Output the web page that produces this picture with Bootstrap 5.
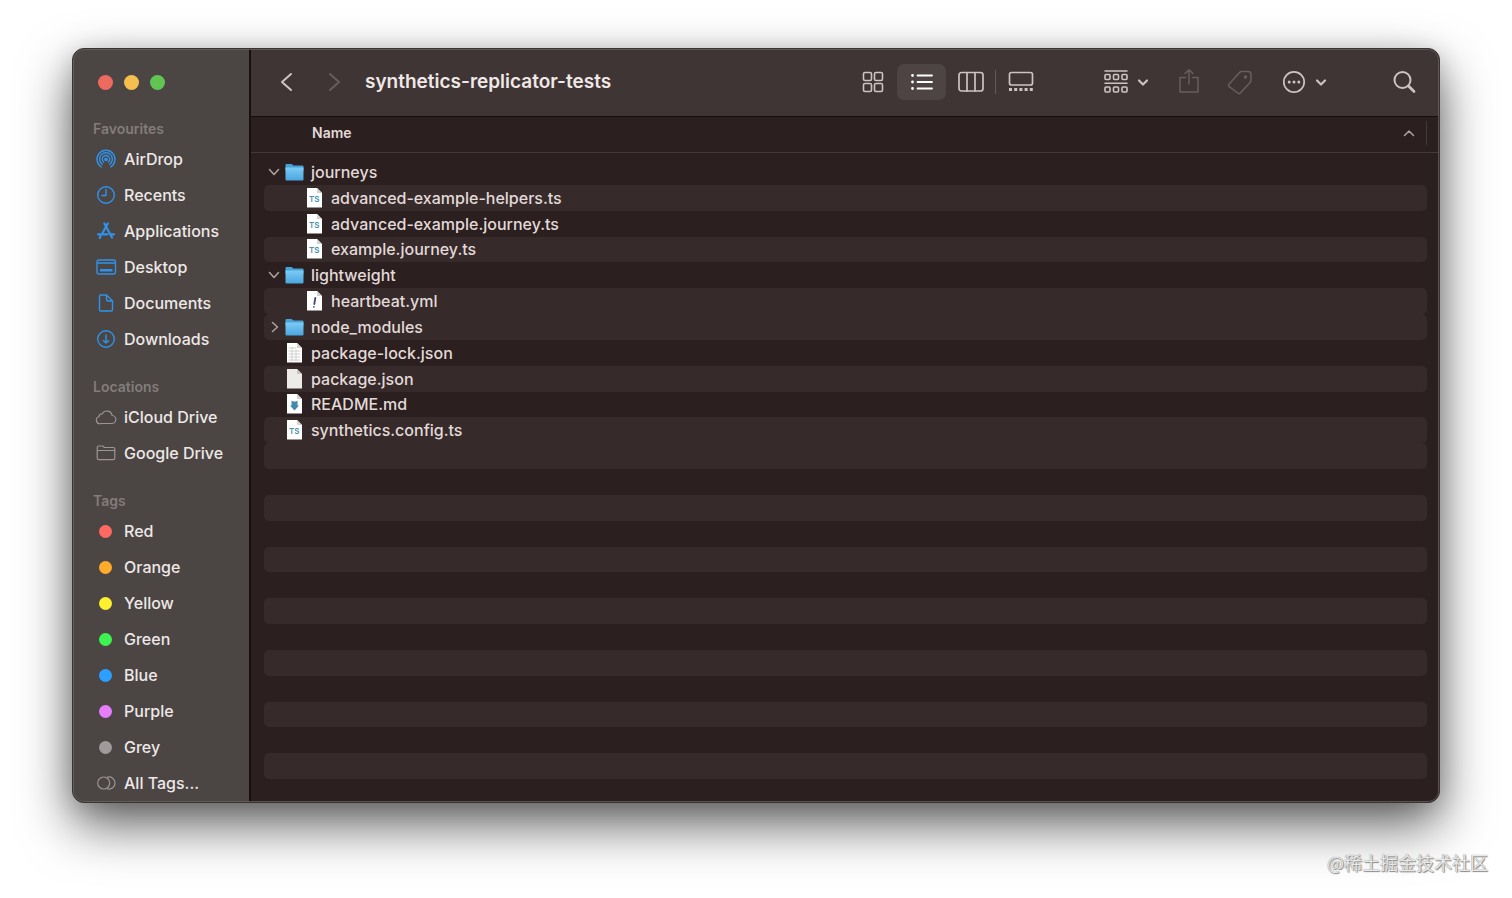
<!DOCTYPE html>
<html lang="en">
<head>
<meta charset="utf-8">
<meta name="viewport" content="width=device-width, initial-scale=1">
<title>synthetics-replicator-tests</title>
<link href="https://cdn.jsdelivr.net/npm/bootstrap@5.3.0/dist/css/bootstrap.min.css" rel="stylesheet">
<style>
  body { font-family: Inter, "Noto Sans CJK SC", sans-serif; font-size: 16px; font-weight: 500; line-height: 24px; color: #e2dad9; background: #fff; }
  svg { display: block; fill: none; stroke: currentColor; stroke-linecap: round; stroke-linejoin: round; flex: none; }
  button { color: inherit; background: none; border: 0; padding: 0; }
  .desk { padding: 48px 72px 95px; overflow: hidden; }
  .finder { border: 1px solid #3a3535; border-radius: 12px; background: #2b1f1f; box-shadow: 0 22px 52px rgba(0,0,0,.62), 0 4px 24px rgba(0,0,0,.15); }
  .finder::after { content: ""; position: absolute; inset: 0; border: 1px solid #6b6564; border-radius: 11px; pointer-events: none; opacity: .7; }
  .side { width: 178px; background: #4b4544; border-right: 2px solid #171010; padding: 26px 0 0 20px; }
  .lights { gap: 11px; padding-left: 5px; margin-bottom: 25px; }
  .light { width: 15px; height: 15px; border-radius: 50%; }
  .side h2 { font-size: 14px; line-height: 20px; font-weight: 600; color: #837c7b; margin: 0 0 2px; }
  .side ul { margin-bottom: 20px; }
  .side li a { height: 36px; gap: 6px; color: #eee8e7; text-decoration: none; }
  .side li svg { width: 24px; height: 24px; margin-left: 1px; stroke-width: 1.4; color: #3092ea; }
  .side li svg.dim { color: #9b9493; stroke-width: 1.2; }
  .tagdot { width: 13px; height: 13px; margin: 0 6px; border-radius: 50%; }
  .bar { height: 68px; background: #3f3534; border-bottom: 1px solid #140d0d; padding: 0 22px 1px 24px; color: #cdc3c2; }
  .bar h1 { font-size: 19px; line-height: 24px; font-weight: 600; color: #efe8e7; margin: 0 0 0 18px; }
  .view { width: 49px; height: 36px; border-radius: 7px; }
  .view.on { background: #4e4443; color: #fff; }
  .off { color: #685e5d; }
  .tools { gap: 24px; margin-left: 58px; }
  .find { padding-left: 12px; }
  .files thead tr { height: 36px; border-bottom: 1px solid #453a39; padding: 0 11px 3px 60px; }
  .files th { font-size: 14px; font-weight: 600; }
  .sorter { border-right: 1px solid #43393a; height: 24px; padding-right: 10px; color: #aaa09f; }
  .files tbody { grid-auto-rows: minmax(0, 1fr); padding: 6px 12px 23px 13px; }
  .files tbody tr { border-radius: 5px; }
  .files tbody tr.lit { background: #362a2a; }
  .files td { padding: 0; }
  .twist { width: 20px; height: 20px; color: #aaa09f; }
  .ico { width: 21px; height: 22px; margin-right: 6px; }
  .ico text { font: 600 8px Inter, sans-serif; stroke: none; fill: #4c91a8; }
  .files td.nest { padding-left: 20px; }
  .stamp { right: 24px; bottom: 24px; font-family: "Noto Sans CJK SC", sans-serif; font-size: 18px; font-weight: 400; color: #e8e8e8; text-shadow: 0 0 1px #777, 1px 1px 1px #888; }
</style>
</head>
<body>
<svg width="0" height="0" class="position-absolute" aria-hidden="true">
  <defs>
    <linearGradient id="blue" x1="0" y1="0" x2="0" y2="1"><stop offset="0" stop-color="#7ccbf5"/><stop offset="1" stop-color="#4aa6e0"/></linearGradient>
    <symbol id="folder" viewBox="0 0 21 22"><path d="M1.500 4q0-1 1-1h5l2 1.500h9q1 0 1 1v4h-18z" fill="#46a3da" stroke="none"/><path d="M1.500 6.500h18v12q0 1-1 1h-16q-1 0-1-1z" fill="url(#blue)" stroke="none"/></symbol>
    <symbol id="page" viewBox="0 0 21 22"><path d="M3 1h10l5 5v14.500H3z" fill="#fff" stroke="none"/><path d="M13 1v5h5z" fill="#d3d3d3" stroke="none"/></symbol>
    <symbol id="down" viewBox="0 0 20 20"><path d="M5.500 7.500l4.500 5 4.500-5" stroke-width="1.600"/></symbol>
    <symbol id="right" viewBox="0 0 20 20"><path d="M8.500 5.500l5 4.500-5 4.500" stroke-width="1.600"/></symbol>
  </defs>
</svg>
<main class="desk vh-100 position-relative">
  <div class="finder h-100 d-flex overflow-hidden position-relative">
    <nav class="side flex-shrink-0 overflow-hidden" aria-label="Sidebar">
      <div class="lights d-flex">
        <button class="light" style="background:#ed6a5e" aria-label="Close"></button>
        <button class="light" style="background:#f4bf4f" aria-label="Minimise"></button>
        <button class="light" style="background:#61c554" aria-label="Zoom"></button>
      </div>
      <h2 class="pt-1">Favourites</h2>
      <ul class="list-unstyled">
        <li><a href="#" class="d-flex align-items-center"><svg viewBox="0 0 24 24"><path d="M7.300 20a9 9 0 1 1 9.400 0M8.200 17.300a6.400 6.400 0 1 1 7.600 0M9.600 15a3.700 3.700 0 1 1 4.800 0"/><path d="M12 12.500l-2.200 7.500h4.400z" fill="#4b4544" stroke="none"/><circle cx="12" cy="12.300" r="1.200" fill="currentColor"/></svg>AirDrop</a></li>
        <li><a href="#" class="d-flex align-items-center"><svg viewBox="0 0 24 24"><circle cx="12" cy="12" r="8.300"/><path d="M12 6.500V12.500H8"/></svg>Recents</a></li>
        <li><a href="#" class="d-flex align-items-center"><svg viewBox="0 0 24 24"><path d="M13.800 4.500L8 15M10.300 4.500L18 18.500M4 15.300h9.500M17.200 15.300H20M6.400 17.500L5.700 19" stroke-width="2.200"/></svg>Applications</a></li>
        <li><a href="#" class="d-flex align-items-center"><svg viewBox="0 0 24 24"><rect x="3" y="5" width="18.500" height="14" rx="2"/><path d="M3.500 8h17.500"/><path d="M6 14h12.500v2.500H6z" fill="currentColor" stroke="none"/></svg>Desktop</a></li>
        <li><a href="#" class="d-flex align-items-center"><svg viewBox="0 0 24 24"><path d="M5.500 5.500q0-1.500 1.500-1.500h5.500l6 6v8.500q0 1.500-1.500 1.500H7q-1.500 0-1.500-1.500zM12.500 4v4.500q0 1.500 1.500 1.500h4.500"/></svg>Documents</a></li>
        <li><a href="#" class="d-flex align-items-center"><svg viewBox="0 0 24 24"><circle cx="12" cy="12" r="8.300"/><path d="M12 8v8M9.300 13.500L12 16l2.700-2.500"/></svg>Downloads</a></li>
      </ul>
      <h2>Locations</h2>
      <ul class="list-unstyled">
        <li><a href="#" class="d-flex align-items-center"><svg class="dim" viewBox="0 0 24 24"><path d="M7 18.500h10.500a4 4 0 0 0 .6-8A5.300 5.300 0 0 0 8.200 8.800a3.200 3.200 0 0 0-3.300 3A3.500 3.500 0 0 0 7 18.500z"/></svg>iCloud Drive</a></li>
        <li><a href="#" class="d-flex align-items-center"><svg class="dim" viewBox="0 0 24 24"><path d="M3.200 6.500q0-1.500 1.500-1.500h4l1.800 1.500h8.800q1.500 0 1.500 1.500v9q0 1.700-1.500 1.700H4.700q-1.500 0-1.500-1.700zM3.200 9.500h17.600"/></svg>Google Drive</a></li>
      </ul>
      <h2>Tags</h2>
      <ul class="list-unstyled mb-0">
        <li><a href="#" class="d-flex align-items-center"><span class="tagdot" style="background:#ff6961"></span>Red</a></li>
        <li><a href="#" class="d-flex align-items-center"><span class="tagdot" style="background:#ffab2c"></span>Orange</a></li>
        <li><a href="#" class="d-flex align-items-center"><span class="tagdot" style="background:#fcf02f"></span>Yellow</a></li>
        <li><a href="#" class="d-flex align-items-center"><span class="tagdot" style="background:#3df34f"></span>Green</a></li>
        <li><a href="#" class="d-flex align-items-center"><span class="tagdot" style="background:#2d9fff"></span>Blue</a></li>
        <li><a href="#" class="d-flex align-items-center"><span class="tagdot" style="background:#e77dfb"></span>Purple</a></li>
        <li><a href="#" class="d-flex align-items-center"><span class="tagdot" style="background:#a09a9a"></span>Grey</a></li>
        <li><a href="#" class="d-flex align-items-center"><svg class="dim" viewBox="0 0 24 24"><circle cx="9.700" cy="12" r="6"/><path d="M13.500 6.200a6 6 0 1 1 0 11.600"/></svg>All Tags...</a></li>
      </ul>
    </nav>
    <section class="flex-grow-1 d-flex flex-column">
      <header class="bar d-flex align-items-center flex-shrink-0">
        <button aria-label="Back"><svg width="24" height="24" viewBox="0 0 24 24" stroke-width="2"><path d="M16 4l-9 8 9 8"/></svg></button>
        <button class="off ms-4" aria-label="Forward"><svg width="24" height="24" viewBox="0 0 24 24" stroke-width="2"><path d="M7 4l9 8-9 8"/></svg></button>
        <h1 class="flex-grow-1 text-nowrap">synthetics-replicator-tests</h1>
        <div class="d-flex align-items-center" role="group" aria-label="View">
          <button class="view d-flex align-items-center justify-content-center" aria-label="Icons"><svg width="24" height="24" viewBox="0 0 24 24" stroke-width="1.6"><rect x="2.500" y="2.500" width="8" height="8" rx="1.500"/><rect x="13.500" y="2.500" width="8" height="8" rx="1.500"/><rect x="2.500" y="13.500" width="8" height="8" rx="1.500"/><rect x="13.500" y="13.500" width="8" height="8" rx="1.500"/></svg></button>
          <button class="view on d-flex align-items-center justify-content-center" aria-label="List"><svg width="24" height="24" viewBox="0 0 24 24" stroke-width="1.800"><path d="M7.500 5.500H22M7.500 12H22M7.500 18.500H22"/><path d="M2.500 5.500h.01M2.500 12h.01M2.500 18.500h.01" stroke-width="2.800"/></svg></button>
          <button class="view d-flex align-items-center justify-content-center" aria-label="Columns"><svg width="28" height="24" viewBox="0 0 28 24" stroke-width="1.700"><rect x="2" y="2.500" width="24" height="18.500" rx="2.500"/><path d="M10 3v18M18 3v18"/></svg></button>
          <span class="vr align-self-center" style="height:24px"></span>
          <button class="view d-flex align-items-center justify-content-center" aria-label="Gallery"><svg width="26" height="24" viewBox="0 0 26 24" stroke-width="1.700"><rect x="1.500" y="2.500" width="23" height="12.500" rx="2"/><path d="M1 18h3v3H1zM6.200 18h3v3h-3zM11.400 18h3v3h-3zM16.600 18h3v3h-3zM21.800 18h3v3h-3z" fill="currentColor" stroke="none"/></svg></button>
        </div>
        <div class="tools d-flex align-items-center">
          <button class="d-flex align-items-center" aria-label="Group"><svg width="26" height="26" viewBox="0 0 26 26" stroke-width="1.600"><path d="M2 2h22M2 14.200h22"/><rect x="2" y="5.500" width="5" height="5" rx="1"/><rect x="10.500" y="5.500" width="5" height="5" rx="1"/><rect x="19" y="5.500" width="5" height="5" rx="1"/><rect x="2" y="18" width="5" height="5" rx="1"/><rect x="10.500" y="18" width="5" height="5" rx="1"/><rect x="19" y="18" width="5" height="5" rx="1"/></svg><svg class="ms-1" width="20" height="20" viewBox="0 0 20 20" stroke-width="2.200"><path d="M6 8.500l4 4 4-4"/></svg></button>
          <button class="off" aria-label="Share"><svg width="26" height="26" viewBox="0 0 26 26" stroke-width="1.500"><path d="M8.500 8.500H3V23h18V8.500h-5.500M12 15V.8M8 4.500l4-3.700 4 3.700"/></svg></button>
          <button class="off" aria-label="Tags"><svg width="26" height="26" viewBox="0 0 26 26" stroke-width="1.500"><path d="M2 15.200L12.500 3.500Q13.500 2.400 15 2.400h6q3 0 3 3v5.500q0 1.500-1 2.500L13.300 24q-1.200 1.200-2.500 0l-8.600-6.300q-1.200-1.200-.2-2.500z"/><circle cx="18.500" cy="8" r="1"/></svg></button>
          <button class="d-flex align-items-center ms-1" aria-label="More"><svg width="26" height="26" viewBox="0 0 26 26" stroke-width="1.700"><circle cx="13" cy="13" r="10.200"/><path d="M8.200 13h.01M13 13h.01M17.800 13h.01" stroke-width="3"/></svg><svg class="ms-1" width="20" height="20" viewBox="0 0 20 20" stroke-width="2.200"><path d="M6 8.500l4 4 4-4"/></svg></button>
        </div>
        <button class="find ms-5" aria-label="Search"><svg width="26" height="26" viewBox="0 0 26 26" stroke-width="2"><circle cx="11.500" cy="11" r="8"/><path d="M17.500 17l5.500 5.500" stroke-width="2.800"/></svg></button>
      </header>
      <table class="files d-flex flex-column flex-grow-1">
        <thead class="d-block">
          <tr class="d-flex align-items-center"><th class="flex-grow-1">Name</th><th><button class="sorter d-flex align-items-center" aria-label="Sort"><svg width="14" height="14" viewBox="0 0 14 14" stroke-width="1.500"><path d="M2.500 9.500L7 5l4.500 4.500"/></svg></button></th></tr>
        </thead>
        <tbody class="d-grid flex-grow-1">
          <tr class="d-flex align-items-center"><td class="d-flex align-items-center"><button class="twist" aria-label="Collapse"><svg width="20" height="20"><use href="#down"/></svg></button><svg class="ico"><use href="#folder"/></svg>journeys</td></tr>
          <tr class="d-flex align-items-center lit"><td class="d-flex align-items-center nest"><span class="twist"></span><svg class="ico"><use href="#page"/><text x="5" y="15">TS</text></svg>advanced-example-helpers.ts</td></tr>
          <tr class="d-flex align-items-center"><td class="d-flex align-items-center nest"><span class="twist"></span><svg class="ico"><use href="#page"/><text x="5" y="15">TS</text></svg>advanced-example.journey.ts</td></tr>
          <tr class="d-flex align-items-center lit"><td class="d-flex align-items-center nest"><span class="twist"></span><svg class="ico"><use href="#page"/><text x="5" y="15">TS</text></svg>example.journey.ts</td></tr>
          <tr class="d-flex align-items-center"><td class="d-flex align-items-center"><button class="twist" aria-label="Collapse"><svg width="20" height="20"><use href="#down"/></svg></button><svg class="ico"><use href="#folder"/></svg>lightweight</td></tr>
          <tr class="d-flex align-items-center lit"><td class="d-flex align-items-center nest"><span class="twist"></span><svg class="ico"><use href="#page"/><path d="M11.300 8l-1 6M9.900 16.800v.01" stroke="#4b4670" stroke-width="1.800"/></svg>heartbeat.yml</td></tr>
          <tr class="d-flex align-items-center lit"><td class="d-flex align-items-center"><button class="twist" aria-label="Expand"><svg width="20" height="20"><use href="#right"/></svg></button><svg class="ico"><use href="#folder"/></svg>node_modules</td></tr>
          <tr class="d-flex align-items-center"><td class="d-flex align-items-center"><span class="twist"></span><svg class="ico"><use href="#page"/><path d="M5 6h7M5 9h11M5 12h11M5 15h11M5 18h11M8 5v14M12 8v11" stroke="#d0d0d0" stroke-width="1"/></svg>package-lock.json</td></tr>
          <tr class="d-flex align-items-center lit"><td class="d-flex align-items-center"><span class="twist"></span><svg class="ico"><path d="M3 1h10l5 5v14.500H3z" fill="#ecebe7" stroke="none"/><path d="M13 1v5h5z" fill="#c5c5c3" stroke="none"/></svg>package.json</td></tr>
          <tr class="d-flex align-items-center"><td class="d-flex align-items-center"><span class="twist"></span><svg class="ico"><use href="#page"/><path d="M7.500 7.500l1.500 1h3l1.500-1v5H15L10.500 17.500 6 12.500h1.500z" fill="#4389ac" stroke="none"/></svg>README.md</td></tr>
          <tr class="d-flex align-items-center lit"><td class="d-flex align-items-center"><span class="twist"></span><svg class="ico"><use href="#page"/><text x="5" y="15">TS</text></svg>synthetics.config.ts</td></tr>
          <tr class="lit"><td></td></tr>
          <tr><td></td></tr>
          <tr class="lit"><td></td></tr>
          <tr><td></td></tr>
          <tr class="lit"><td></td></tr>
          <tr><td></td></tr>
          <tr class="lit"><td></td></tr>
          <tr><td></td></tr>
          <tr class="lit"><td></td></tr>
          <tr><td></td></tr>
          <tr class="lit"><td></td></tr>
          <tr><td></td></tr>
          <tr class="lit"><td></td></tr>
        </tbody>
      </table>
    </section>
  </div>
  <div class="stamp position-absolute">@稀土掘金技术社区</div>
</main>
<script src="https://cdn.jsdelivr.net/npm/bootstrap@5.3.0/dist/js/bootstrap.bundle.min.js"></script>
</body>
</html>
